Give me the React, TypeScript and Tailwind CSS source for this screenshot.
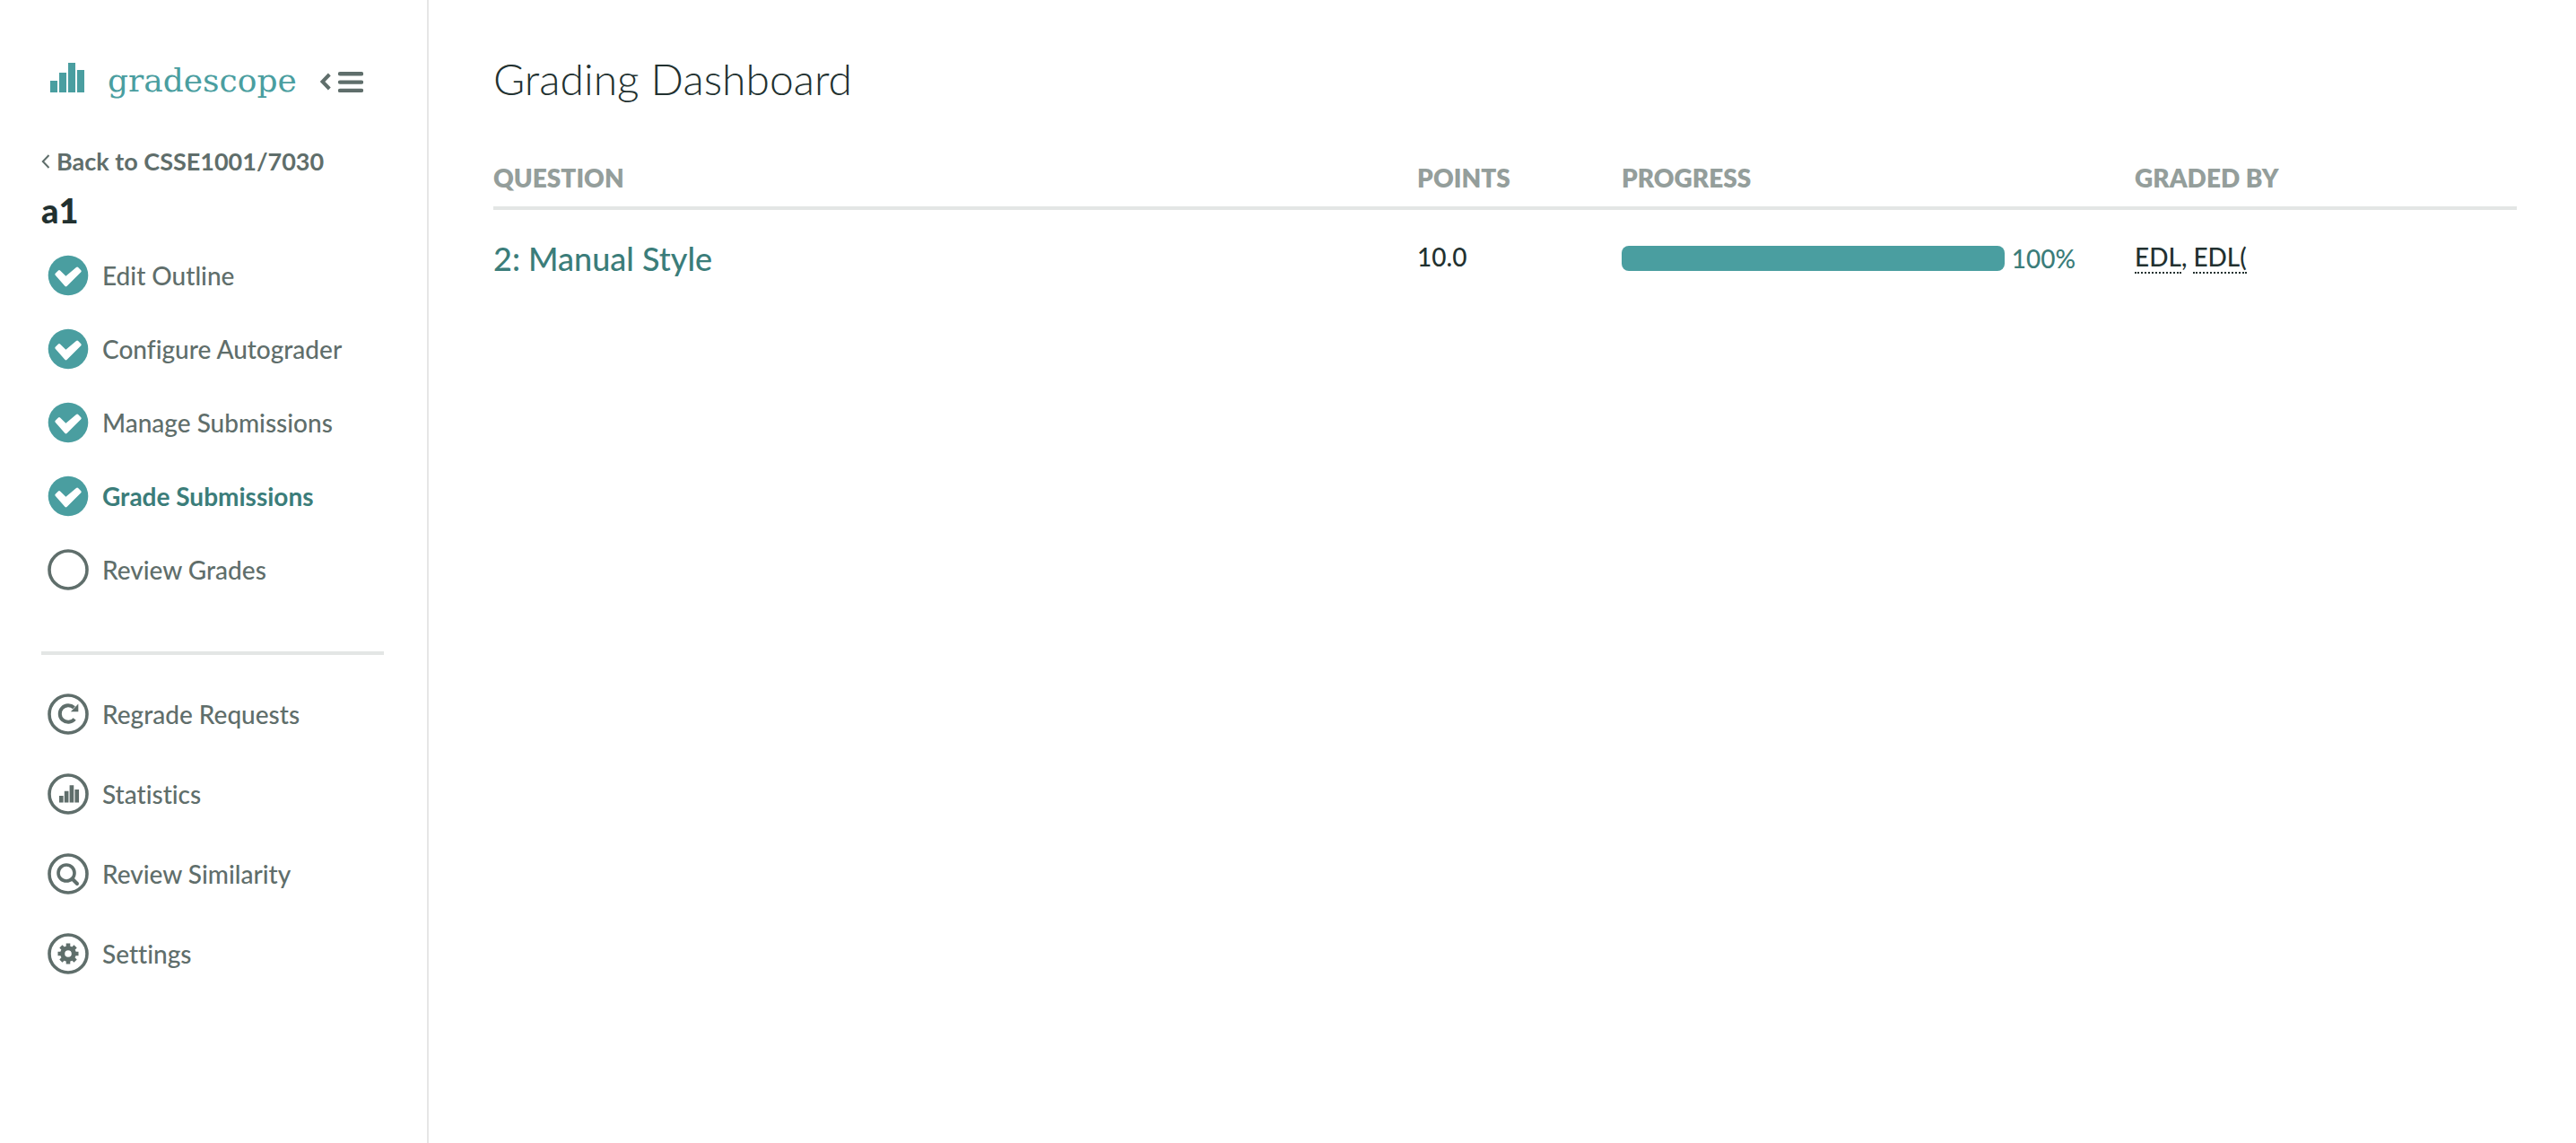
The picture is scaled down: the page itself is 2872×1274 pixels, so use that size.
import type { ReactNode } from "react";

const BARS = (
  <path d="M0 20h8v13H0zM10 11h8v22h-8zM20 0h8v33h-8zM30 8h8v25h-8z" />
);

function CheckedCircle() {
  return (
    <svg viewBox="0 0 46 46" className="size-[46px] shrink-0" aria-hidden="true">
      <circle cx="23" cy="23" r="22.3" fill="#4a9ea0" />
      <path d="M8.7 20.8l3.3-3.4q1-.9 2 0l6.4 6.3L32 13.9q1.1-.9 2.100 0l3.2 3.300q.9 1 0 2L21.500 35.100q-1 .8-2 0L8.700 22.800q-.9-1 0-2z" fill="#fff" />
    </svg>
  );
}

function Ring({ children }: { children?: ReactNode }) {
  return (
    <svg viewBox="0 0 46 46" className="size-[46px] shrink-0" aria-hidden="true">
      <circle cx="23" cy="23" r="21" fill="none" stroke="#5f6e6b" strokeWidth="3.6" />
      {children}
    </svg>
  );
}

const steps = [
  { label: "Edit Outline", done: true },
  { label: "Configure Autograder", done: true },
  { label: "Manage Submissions", done: true },
  { label: "Grade Submissions", done: true, current: true },
  { label: "Review Grades", done: false },
];

const tools = [
  {
    label: "Regrade Requests",
    icon: (
      <>
        <path d="M30.200 28.500A9.300 9.300 0 1 1 29.500 15.800" fill="none" stroke="#5f6e6b" strokeWidth="4" />
        <path d="M34.300 11.600v8.700h-8.400z" fill="#5f6e6b" />
      </>
    ),
  },
  {
    label: "Statistics",
    icon: (
      <g transform="translate(13 13.300) scale(.58)" fill="#5f6e6b">
        {BARS}
      </g>
    ),
  },
  {
    label: "Review Similarity",
    icon: (
      <g fill="none" stroke="#5f6e6b" strokeWidth="3.600" strokeLinecap="round">
        <circle cx="21" cy="22" r="9" />
        <path d="M27.500 28.500l5.500 5.500" strokeWidth="4" />
      </g>
    ),
  },
  {
    label: "Settings",
    icon: (
      <g stroke="#5f6e6b">
        <circle cx="23" cy="23" r="6.300" fill="none" strokeWidth="5" />
        <path
          d="M23 11.500v5M23 29.500v5M11.500 23h5M29.500 23h5M14.900 14.900l3.500 3.500M27.600 27.600l3.500 3.500M14.900 31.100l3.500-3.500M27.600 18.400l3.500-3.500"
          strokeWidth="4.600"
        />
      </g>
    ),
  },
];

function Sidebar() {
  return (
    <aside className="w-[478px] shrink-0 border-r-2 border-[#e6e6e6] pl-[46px] pr-12 pt-[66px]">
      <div className="flex items-center pl-2.5">
        <a href="#home" className="flex items-center gap-[26px]">
          <svg viewBox="0 0 38 33" className="mb-2 h-[33px] w-[38px]" fill="#4a9ea0" aria-hidden="true">
            {BARS}
          </svg>
          <span className="font-['DejaVu_Serif',serif] text-4xl leading-[48px] text-[#4a9ea0]">gradescope</span>
        </a>
        <button type="button" aria-label="Collapse sidebar" className="ml-[26px] mt-1">
          <svg viewBox="0 0 48 24" className="h-6 w-12" fill="none" stroke="#5f6e6b" aria-hidden="true">
            <path d="M10.300 3L2.500 11l7.800 8" strokeWidth="4" />
            <path d="M22 2.300h24M22 11.600h24M22 20.900h24" strokeWidth="4.400" strokeLinecap="round" />
          </svg>
        </button>
      </div>

      <a href="#course" className="mt-12 flex items-center gap-[7px] text-[27px] font-bold leading-9">
        <svg viewBox="0 0 10 16" className="h-4 w-2.5" fill="none" stroke="#5f6e6b" strokeWidth="2" aria-hidden="true">
          <path d="M8.500 1L1.800 8l6.700 7" />
        </svg>
        Back to CSSE1001/7030
      </a>
      <h2 className="mt-2.5 text-[38px] font-black leading-[52px] text-[#223130]">a1</h2>

      <nav aria-label="Assignment steps">
        <ul className="mt-6 flex flex-col gap-9 pl-[7px]">
          {steps.map((s) => (
            <li key={s.label}>
              <a href="#step" className="flex items-center gap-[15px]" aria-current={s.current ? "page" : undefined}>
                {s.done ? <CheckedCircle /> : <Ring />}
                <span className={s.current ? "font-bold text-[#3b7d7a]" : ""}>{s.label}</span>
              </a>
            </li>
          ))}
        </ul>
      </nav>

      <hr className="mt-[68px] border-t-4 border-[#e3e6e5]" />

      <nav aria-label="Assignment tools">
        <ul className="mt-[43px] flex flex-col gap-[43px] pl-[7px]">
          {tools.map((t) => (
            <li key={t.label}>
              <a href="#tool" className="flex items-center gap-[15px]">
                <Ring>{t.icon}</Ring>
                <span>{t.label}</span>
              </a>
            </li>
          ))}
        </ul>
      </nav>
    </aside>
  );
}

const grader = "border-b-2 border-dotted border-[#223130] no-underline";

export default function App() {
  return (
    <div className="flex min-h-screen bg-white font-['Lato',sans-serif] text-[28px] font-medium leading-9 text-[#5f6e6b] [font-variant-ligatures:none]">
      <Sidebar />
      <main className="min-w-0 grow pl-[72px] pr-[66px] pt-14 text-[#223130]">
        <h1 className="text-5xl font-light leading-[64px]">Grading Dashboard</h1>
        <table className="mt-[60px] w-full table-fixed border-collapse text-left">
          <colgroup>
            <col className="w-[45.66%]" />
            <col className="w-[10.1%]" />
            <col className="w-[25.36%]" />
            <col />
          </colgroup>
          <thead>
            <tr className="border-b-4 border-[#e3e6e5] text-[#949e9b]">
              <th className="pb-3.5 font-extrabold">QUESTION</th>
              <th className="pb-3.5 font-extrabold">POINTS</th>
              <th className="pb-3.5 font-extrabold">PROGRESS</th>
              <th className="pb-3.5 font-extrabold">GRADED BY</th>
            </tr>
          </thead>
          <tbody>
            <tr className="align-top">
              <td className="pt-8">
                <a href="#question" className="block text-4xl leading-[44px] text-[#3b7d7a]">
                  2: Manual Style
                </a>
              </td>
              <td className="pt-[34px]">10.0</td>
              <td className="pr-[66px] pt-9">
                <div className="flex items-center gap-2">
                  <div className="h-7 grow rounded-lg bg-[#4a9ea0]" role="progressbar" aria-label="Graded" aria-valuenow={100} />
                  <span className="text-[#3b7d7a]">100%</span>
                </div>
              </td>
              <td className="pt-[34px]">
                <abbr className={grader}>EDL</abbr>, <abbr className={grader}>EDL(</abbr>
              </td>
            </tr>
          </tbody>
        </table>
      </main>
    </div>
  );
}
